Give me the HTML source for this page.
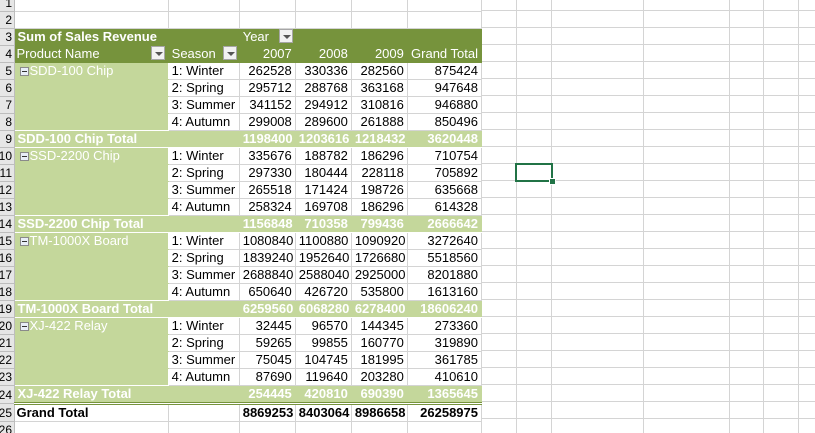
<!DOCTYPE html>
<html><head><meta charset="utf-8"><style>
html,body{margin:0;padding:0;width:815px;height:433px;overflow:hidden;background:#fff;position:relative;font-family:"Liberation Sans",Arial,sans-serif;font-size:13px}
#grid{position:absolute;left:0;top:0;width:815px;height:433px;background:repeating-linear-gradient(to bottom,transparent 0 16px,#d4d4d4 16px 17px);background-position:0 -6px}
.v{position:absolute;top:0;width:1px;height:433px;background:#d4d4d4}
table{position:absolute;left:0;top:-5px;border-collapse:collapse;table-layout:fixed;width:482px}
td{height:16px;padding:0 3px;border-right:1px solid #d4d4d4;border-bottom:1px solid #d4d4d4;white-space:nowrap;overflow:hidden;line-height:16px;color:#000;background:#fff}
td.h{background:#e6e6e6;padding:0;border-color:#bdbdbd;font-size:12px}
td.h div{position:relative;width:13px;height:16px;overflow:hidden}
td.h span{position:absolute;right:1px;top:0}
.n{text-align:right}
.dg{background:#76933c;color:#fff;border-color:#76933c}
.pa{background:#c4d79b;color:#fff;border-bottom-color:#c4d79b;border-right-color:#fff;padding-left:5px}
.pl{border-bottom-color:#fff}
.t{background:#c4d79b;color:#fff;font-weight:bold;border-bottom-color:#fff;border-right-color:#c4d79b}
.g{font-weight:bold;border-top:3px double #76933c}
.b{font-weight:bold}
.dd{position:absolute;width:14px;height:14px;background:#f2f2f2;border:1px solid #a6a6a6;box-sizing:border-box}
.dd:after{content:"";position:absolute;left:3px;top:5px;border-left:4px solid transparent;border-right:4px solid transparent;border-top:4px solid #555}
.mi{display:inline-block;width:7px;height:7px;border:1px solid #8a8a8a;background:#e8eef8;position:relative;vertical-align:-1px;margin-right:1px}
.mi:after{content:"";position:absolute;left:1px;top:3px;width:5px;height:1px;background:#333}
</style></head><body>
<div id="grid"></div>
<div class="v" style="left:516px"></div><div class="v" style="left:551px"></div><div class="v" style="left:643px"></div><div class="v" style="left:729px"></div><div class="v" style="left:763px"></div><div class="v" style="left:798px"></div>
<table>
<colgroup><col style="width:14px"><col style="width:154px"><col style="width:71px"><col style="width:56px"><col style="width:56px"><col style="width:56px"><col style="width:74px"></colgroup>
<tr><td class="h"><div><span>1</span></div></td><td></td><td></td><td></td><td></td><td></td><td></td></tr>
<tr><td class="h"><div><span>2</span></div></td><td></td><td></td><td></td><td></td><td></td><td></td></tr>
<tr><td class="h"><div><span>3</span></div></td><td class="dg b">Sum of Sales Revenue</td><td class="dg"></td><td class="dg">Year</td><td class="dg"></td><td class="dg"></td><td class="dg"></td></tr>
<tr><td class="h"><div><span>4</span></div></td><td class="dg" style="padding-left:2px">Product Name</td><td class="dg">Season</td><td class="dg n">2007</td><td class="dg n">2008</td><td class="dg n">2009</td><td class="dg n">Grand Total</td></tr>
<tr><td class="h"><div><span>5</span></div></td><td class="pa"><i class="mi"></i>SDD-100 Chip</td><td>1: Winter</td><td class="n">262528</td><td class="n">330336</td><td class="n">282560</td><td class="n">875424</td></tr>
<tr><td class="h"><div><span>6</span></div></td><td class="pa"></td><td>2: Spring</td><td class="n">295712</td><td class="n">288768</td><td class="n">363168</td><td class="n">947648</td></tr>
<tr><td class="h"><div><span>7</span></div></td><td class="pa"></td><td>3: Summer</td><td class="n">341152</td><td class="n">294912</td><td class="n">310816</td><td class="n">946880</td></tr>
<tr><td class="h"><div><span>8</span></div></td><td class="pa pl"></td><td>4: Autumn</td><td class="n">299008</td><td class="n">289600</td><td class="n">261888</td><td class="n">850496</td></tr>
<tr><td class="h"><div><span>9</span></div></td><td class="t">SDD-100 Chip Total</td><td class="t"></td><td class="t n">1198400</td><td class="t n">1203616</td><td class="t n">1218432</td><td class="t n">3620448</td></tr>
<tr><td class="h"><div><span>10</span></div></td><td class="pa"><i class="mi"></i>SSD-2200 Chip</td><td>1: Winter</td><td class="n">335676</td><td class="n">188782</td><td class="n">186296</td><td class="n">710754</td></tr>
<tr><td class="h"><div><span>11</span></div></td><td class="pa"></td><td>2: Spring</td><td class="n">297330</td><td class="n">180444</td><td class="n">228118</td><td class="n">705892</td></tr>
<tr><td class="h"><div><span>12</span></div></td><td class="pa"></td><td>3: Summer</td><td class="n">265518</td><td class="n">171424</td><td class="n">198726</td><td class="n">635668</td></tr>
<tr><td class="h"><div><span>13</span></div></td><td class="pa pl"></td><td>4: Autumn</td><td class="n">258324</td><td class="n">169708</td><td class="n">186296</td><td class="n">614328</td></tr>
<tr><td class="h"><div><span>14</span></div></td><td class="t">SSD-2200 Chip Total</td><td class="t"></td><td class="t n">1156848</td><td class="t n">710358</td><td class="t n">799436</td><td class="t n">2666642</td></tr>
<tr><td class="h"><div><span>15</span></div></td><td class="pa"><i class="mi"></i>TM-1000X Board</td><td>1: Winter</td><td class="n">1080840</td><td class="n">1100880</td><td class="n">1090920</td><td class="n">3272640</td></tr>
<tr><td class="h"><div><span>16</span></div></td><td class="pa"></td><td>2: Spring</td><td class="n">1839240</td><td class="n">1952640</td><td class="n">1726680</td><td class="n">5518560</td></tr>
<tr><td class="h"><div><span>17</span></div></td><td class="pa"></td><td>3: Summer</td><td class="n">2688840</td><td class="n">2588040</td><td class="n">2925000</td><td class="n">8201880</td></tr>
<tr><td class="h"><div><span>18</span></div></td><td class="pa pl"></td><td>4: Autumn</td><td class="n">650640</td><td class="n">426720</td><td class="n">535800</td><td class="n">1613160</td></tr>
<tr><td class="h"><div><span>19</span></div></td><td class="t">TM-1000X Board Total</td><td class="t"></td><td class="t n">6259560</td><td class="t n">6068280</td><td class="t n">6278400</td><td class="t n">18606240</td></tr>
<tr><td class="h"><div><span>20</span></div></td><td class="pa"><i class="mi"></i>XJ-422 Relay</td><td>1: Winter</td><td class="n">32445</td><td class="n">96570</td><td class="n">144345</td><td class="n">273360</td></tr>
<tr><td class="h"><div><span>21</span></div></td><td class="pa"></td><td>2: Spring</td><td class="n">59265</td><td class="n">99855</td><td class="n">160770</td><td class="n">319890</td></tr>
<tr><td class="h"><div><span>22</span></div></td><td class="pa"></td><td>3: Summer</td><td class="n">75045</td><td class="n">104745</td><td class="n">181995</td><td class="n">361785</td></tr>
<tr><td class="h"><div><span>23</span></div></td><td class="pa pl"></td><td>4: Autumn</td><td class="n">87690</td><td class="n">119640</td><td class="n">203280</td><td class="n">410610</td></tr>
<tr><td class="h"><div><span>24</span></div></td><td class="t">XJ-422 Relay Total</td><td class="t"></td><td class="t n">254445</td><td class="t n">420810</td><td class="t n">690390</td><td class="t n">1365645</td></tr>
<tr><td class="h"><div><span>25</span></div></td><td class="g" style="padding-left:2px">Grand Total</td><td class="g"></td><td class="g n">8869253</td><td class="g n">8403064</td><td class="g n">8986658</td><td class="g n">26258975</td></tr>
<tr><td class="h"><div><span>26</span></div></td><td></td><td></td><td></td><td></td><td></td><td></td></tr>
</table>
<div class="dd" style="left:279px;top:29px"></div>
<div class="dd" style="left:151px;top:46px"></div>
<div class="dd" style="left:223px;top:46px"></div>
<div style="position:absolute;left:515px;top:163px;width:34px;height:15px;border:2px solid #217346"></div>
<div style="position:absolute;left:549px;top:178px;width:5px;height:5px;background:#217346;border:1px solid #fff"></div>
</body></html>
